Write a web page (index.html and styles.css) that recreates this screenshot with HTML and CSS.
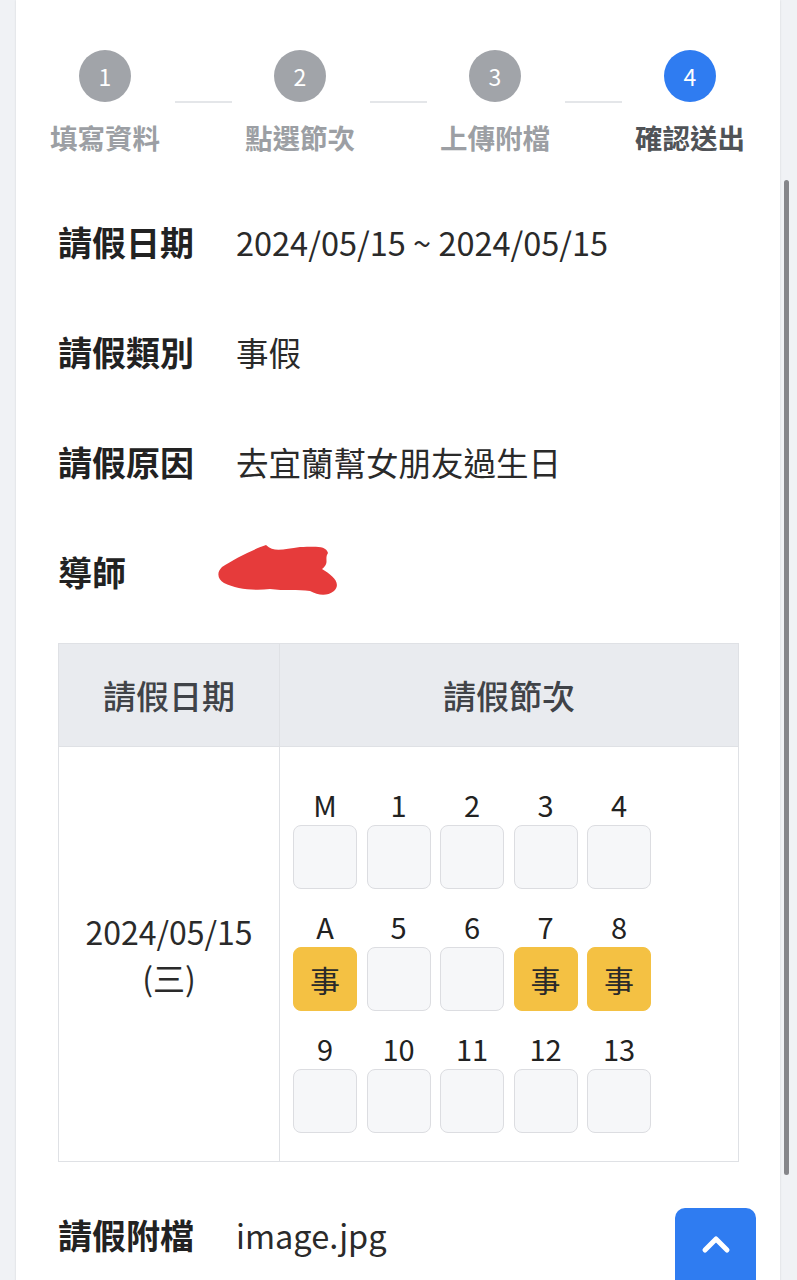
FILE: index.html
```html
<!DOCTYPE html>
<html lang="zh-Hant">
<head>
  <meta charset="UTF-8">
  <title>請假申請 - 確認送出</title>
  <link rel="stylesheet" href="styles.css">
</head>
<body>
  <div class="card">
    <div class="steps">
      <div class="step">
        <div class="step-num">1</div>
        <div class="step-name">填寫資料</div>
      </div>
      <div class="step-line"></div>
      <div class="step">
        <div class="step-num">2</div>
        <div class="step-name">點選節次</div>
      </div>
      <div class="step-line"></div>
      <div class="step">
        <div class="step-num">3</div>
        <div class="step-name">上傳附檔</div>
      </div>
      <div class="step-line"></div>
      <div class="step active">
        <div class="step-num">4</div>
        <div class="step-name">確認送出</div>
      </div>
    </div>

    <div class="info-row">
      <div class="info-label">請假日期</div>
      <div class="info-value">2024/05/15 ~ 2024/05/15</div>
    </div>
    <div class="info-row">
      <div class="info-label">請假類別</div>
      <div class="info-value">事假</div>
    </div>
    <div class="info-row">
      <div class="info-label">請假原因</div>
      <div class="info-value">去宜蘭幫女朋友過生日</div>
    </div>
    <div class="info-row">
      <div class="info-label">導師</div>
      <div class="info-value">
        <!-- 導師姓名已塗掉 -->
        <svg class="scribble" width="130" height="64" viewBox="0 0 130 64">
          <path d="M8 28 C20 20 40 10 52 6 C60 14 70 10 86 8 C100 8 112 6 114 14 C110 20 116 24 108 30 C118 36 128 44 120 52 C112 58 104 56 96 52 C84 50 70 52 56 50 C40 52 22 50 10 44 C4 40 2 34 8 28 Z" fill="#e63b3b"/>
        </svg>
      </div>
    </div>

    <table class="period-table">
      <thead>
        <tr>
          <th class="col-date">請假日期</th>
          <th>請假節次</th>
        </tr>
      </thead>
      <tbody>
        <tr>
          <td class="col-date">2024/05/15<br>(三)</td>
          <td class="periods-cell">
            <div class="periods">
              <div class="period"><span>M</span><div class="box"></div></div>
              <div class="period"><span>1</span><div class="box"></div></div>
              <div class="period"><span>2</span><div class="box"></div></div>
              <div class="period"><span>3</span><div class="box"></div></div>
              <div class="period"><span>4</span><div class="box"></div></div>

              <div class="period"><span>A</span><div class="box leave">事</div></div>
              <div class="period"><span>5</span><div class="box"></div></div>
              <div class="period"><span>6</span><div class="box"></div></div>
              <div class="period"><span>7</span><div class="box leave">事</div></div>
              <div class="period"><span>8</span><div class="box leave">事</div></div>

              <div class="period"><span>9</span><div class="box"></div></div>
              <div class="period"><span>10</span><div class="box"></div></div>
              <div class="period"><span>11</span><div class="box"></div></div>
              <div class="period"><span>12</span><div class="box"></div></div>
              <div class="period"><span>13</span><div class="box"></div></div>
            </div>
          </td>
        </tr>
      </tbody>
    </table>

    <div class="info-row">
      <div class="info-label">請假附檔</div>
      <div class="info-value">image.jpg</div>
    </div>
  </div>

  <div class="scrollbar"></div>

  <button class="to-top">
    <svg width="30" height="20" viewBox="0 0 30 20">
      <path d="M4 16 L15 5 L26 16" fill="none" stroke="white" stroke-width="5" stroke-linecap="round" stroke-linejoin="round"/>
    </svg>
  </button>
</body>
</html>
```

FILE: styles.css
```css
body {
  margin: 0;
  background: #f0f2f5;
  font-family: "Noto Sans CJK TC", "Noto Sans", sans-serif;
  color: #222;
  height: 1280px;
  overflow: hidden;
}

.card {
  background: white;
  margin-left: 16px;
  width: 764px;
  padding: 50px 0 0 42px;
  box-sizing: border-box;
  min-height: 1300px;
  box-shadow: 0 0 2px rgba(0, 0, 0, 0.12);
}

/* steps */

.steps {
  display: flex;
  margin-left: -13px;
  width: 705px;
}

.step {
  width: 120px;
  display: flex;
  flex-direction: column;
  align-items: center;
}

.step-num {
  width: 52px;
  height: 52px;
  border-radius: 50%;
  background: #a1a4a9;
  color: white;
  font-size: 23px;
  display: flex;
  align-items: center;
  justify-content: center;
}

.step-name {
  margin-top: 16px;
  font-size: 27.5px;
  font-weight: bold;
  color: #9c9fa4;
  line-height: 38px;
}

.step.active .step-num {
  background: #2f7cf1;
}

.step.active .step-name {
  color: #505357;
}

.step-line {
  width: 57px;
  height: 2px;
  background: #e4e6e9;
  margin: 51px 8px 0 10px;
}

/* info rows */

.info-row {
  display: flex;
  align-items: center;
  height: 110px;
}

.steps + .info-row {
  margin-top: 30px;
}

.info-label {
  width: 178px;
  font-size: 34px;
  font-weight: bold;
  color: #222;
}

.info-value {
  font-size: 32.5px;
  color: #2a2a2a;
}

.scribble {
  display: block;
  margin-left: -22px;
}

/* period table */

.period-table {
  width: 681px;
  border-collapse: collapse;
  margin: 17px 0 17px;
}

.period-table th,
.period-table td {
  border: 1.5px solid #dfe1e5;
}

.period-table th {
  background: #e9ebef;
  height: 100px;
  font-size: 33px;
  font-weight: 500;
  color: #404348;
}

.period-table th.col-date,
.period-table td.col-date {
  width: 218px;
}

.period-table td.col-date {
  text-align: center;
  font-size: 32px;
  line-height: 46px;
  color: #2a2a2a;
}

.periods-cell {
  padding: 41px 0 28px 13px;
}

.periods {
  display: grid;
  grid-template-columns: repeat(5, 64px);
  column-gap: 9.5px;
  row-gap: 21px;
}

.period {
  display: flex;
  flex-direction: column;
  align-items: center;
  gap: 5px;
}

.period span {
  font-size: 29px;
  line-height: 32px;
  color: #222;
}

.box {
  width: 64px;
  height: 64px;
  box-sizing: border-box;
  border: 1.5px solid #dcdde1;
  border-radius: 8px;
  background: #f6f7f9;
  display: flex;
  align-items: center;
  justify-content: center;
  font-size: 30px;
}

.box.leave {
  background: #f4c143;
  border-color: #f4c143;
  color: #2a2a2a;
}

/* overlays */

.scrollbar {
  position: fixed;
  left: 784px;
  top: 180px;
  width: 5px;
  height: 995px;
  border-radius: 3px;
  background: #85868a;
}

.to-top {
  position: fixed;
  left: 675px;
  top: 1208px;
  width: 81px;
  height: 90px;
  border: none;
  border-radius: 10px;
  background: #2f7cf1;
  padding: 0 0 18px;
  display: flex;
  align-items: center;
  justify-content: center;
}
```
